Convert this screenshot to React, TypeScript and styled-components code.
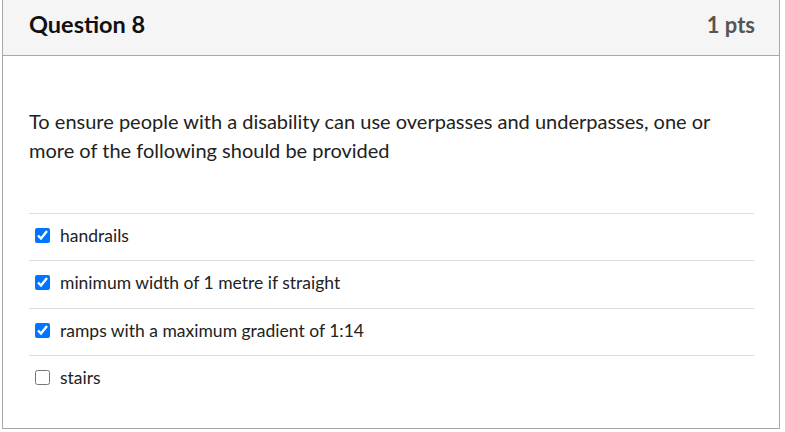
import React from "react";
import styled, { createGlobalStyle } from "styled-components";

const Global = createGlobalStyle`
  html, body { margin: 0; padding: 0; background: #fff; }
  body { font-family: Lato, "Open Sans", sans-serif; }
`;

const Card = styled.section`
  margin-left: 2px;
  width: 776px;
  border: 1px solid #a8a8a8;
  border-top: none;
  background: #fff;
`;

const Header = styled.header`
  height: 56px;
  box-sizing: border-box;
  background: #f5f5f5;
  border-bottom: 1px solid #a8a8a8;
  display: flex;
  align-items: baseline;
  justify-content: space-between;
  padding: 10px 24px 0 26px;
`;

const Title = styled.h2`
  margin: 0;
  font-size: 23.5px;
  line-height: 28px;
  font-weight: 700;
  color: #111;
`;

const Points = styled.span`
  font-size: 22px;
  font-weight: 700;
  color: #555;
`;

const Body = styled.div`
  padding: 51px 25px 26px 26px;
`;

const Prompt = styled.p`
  margin: 0 0 49px;
  font-size: 20px;
  line-height: 28.5px;
  color: #222;
`;

const Options = styled.div`
  display: flex;
  flex-direction: column;
`;

const Option = styled.label`
  display: flex;
  align-items: center;
  gap: 10px;
  padding: 9px 0 12.3px 6px;
  border-top: 1px solid #ddd;
  font-size: 17.5px;
  line-height: 25px;
  color: #222;
`;

const Box = styled.input`
  width: 15px;
  height: 15px;
  margin: 0;
  accent-color: #0075ff;
`;

const options = [
  { text: "handrails", checked: true },
  { text: "minimum width of 1 metre if straight", checked: true },
  { text: "ramps with a maximum gradient of 1:14", checked: true },
  { text: "stairs", checked: false },
];

export default function App() {
  return (
    <>
      <Global />
      <Card>
        <Header>
          <Title>Question 8</Title>
          <Points>1 pts</Points>
        </Header>
        <Body>
          <Prompt>
            To ensure people with a disability can use overpasses and underpasses, one or
            more of the following should be provided
          </Prompt>
          <Options>
            {options.map((o) => (
              <Option key={o.text}>
                <Box type="checkbox" defaultChecked={o.checked} />
                {o.text}
              </Option>
            ))}
          </Options>
        </Body>
      </Card>
    </>
  );
}
